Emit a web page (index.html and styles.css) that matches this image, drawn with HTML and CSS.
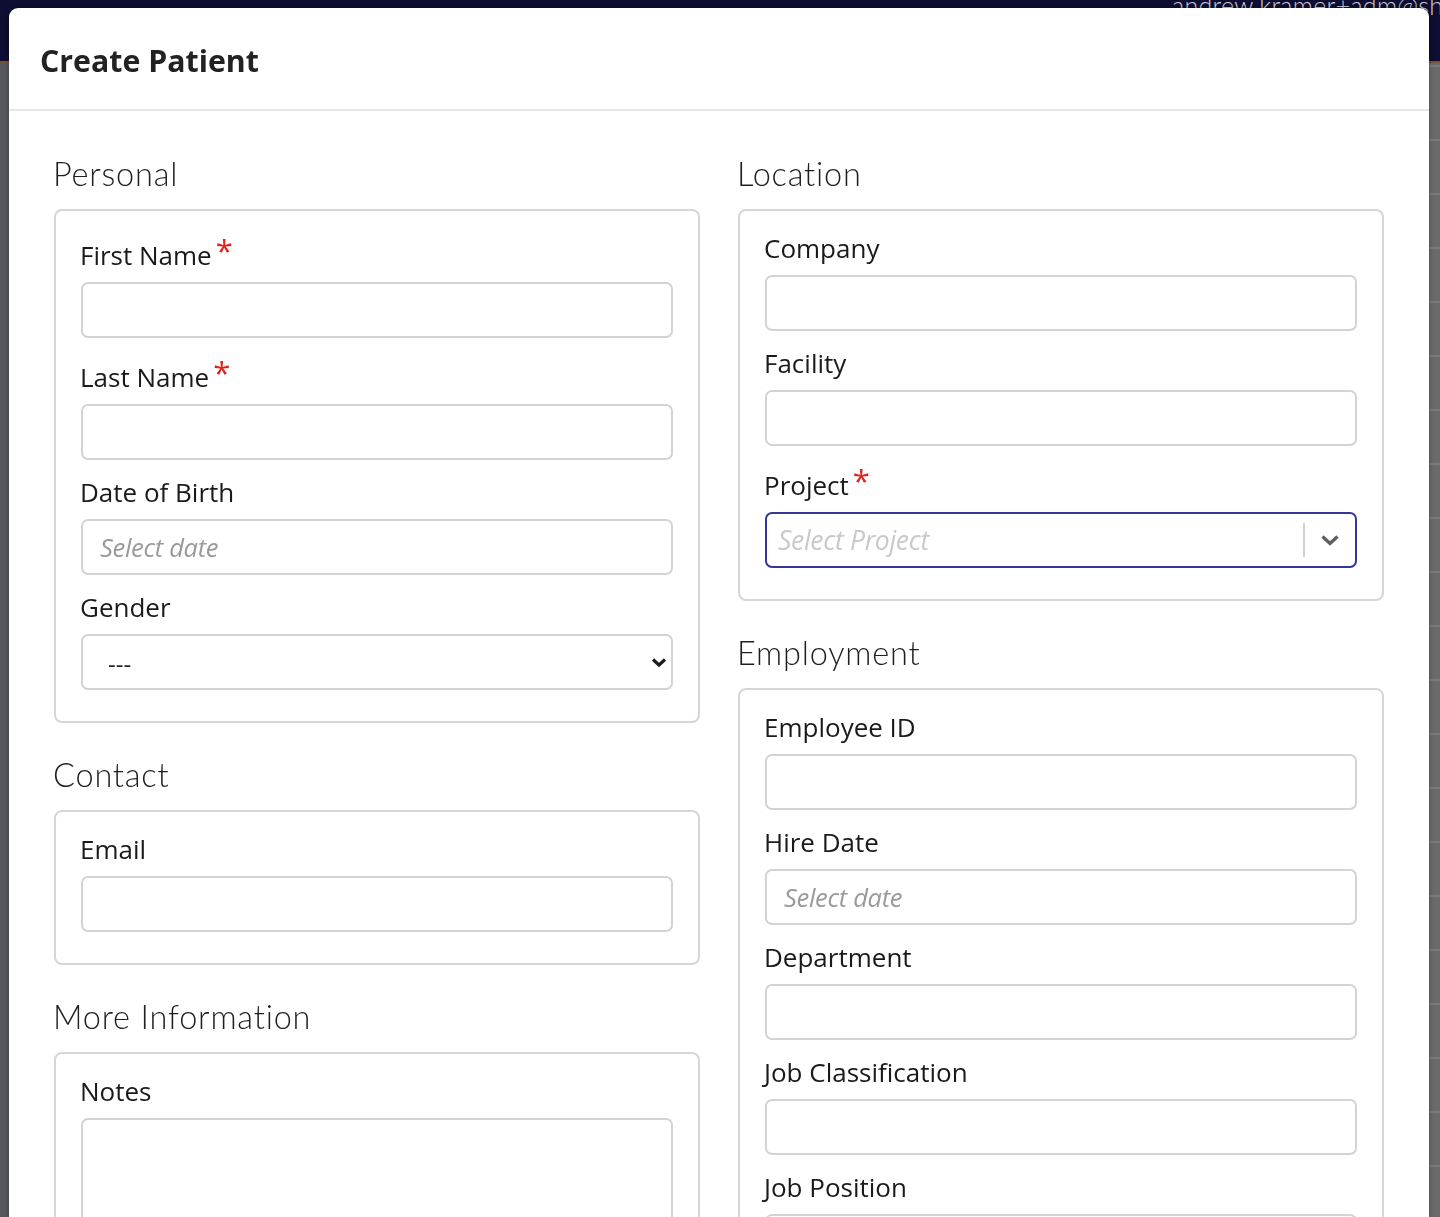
FILE: index.html
```html
<!DOCTYPE html>
<html lang="en">
<head>
<meta charset="utf-8">
<title>Create Patient</title>
<link rel="stylesheet" href="styles.css">
</head>
<body>
<div class="app">
  <header class="topbar"><span class="user">andrew.kramer+adm@sh</span></header>
  <div class="page">
    <aside class="sidebar"></aside>
    <main class="content"></main>
  </div>
</div>

<div class="modal" role="dialog" aria-labelledby="modal-title">
  <div class="modal-header">
    <h2 class="modal-title" id="modal-title">Create Patient</h2>
  </div>
  <div class="modal-body">
    <div class="col">
      <section class="section">
        <h3 class="section-title">Personal</h3>
        <div class="box">
          <div class="field">
            <label class="label req">First Name<span class="star">*</span></label>
            <div class="input"></div>
          </div>
          <div class="field">
            <label class="label req">Last Name<span class="star">*</span></label>
            <div class="input"></div>
          </div>
          <div class="field">
            <label class="label">Date of Birth</label>
            <div class="input"><span class="ph">Select date</span></div>
          </div>
          <div class="field">
            <label class="label">Gender</label>
            <div class="input select">
              <span class="val">---</span>
              <svg class="native-chev" width="16" height="12" viewBox="0 0 16 12"><path d="M2 3.5 L8 9 L14 3.5" fill="none" stroke="#1e1e1e" stroke-width="3.2"/></svg>
            </div>
          </div>
        </div>
      </section>
      <section class="section">
        <h3 class="section-title">Contact</h3>
        <div class="box">
          <div class="field">
            <label class="label">Email</label>
            <div class="input"></div>
          </div>
        </div>
      </section>
      <section class="section">
        <h3 class="section-title">More Information</h3>
        <div class="box">
          <div class="field">
            <label class="label">Notes</label>
            <div class="input textarea"></div>
          </div>
        </div>
      </section>
    </div>
    <div class="col">
      <section class="section">
        <h3 class="section-title">Location</h3>
        <div class="box">
          <div class="field">
            <label class="label">Company</label>
            <div class="input"></div>
          </div>
          <div class="field">
            <label class="label">Facility</label>
            <div class="input"></div>
          </div>
          <div class="field">
            <label class="label req">Project<span class="star">*</span></label>
            <div class="input rselect">
              <span class="ph light">Select Project</span>
              <span class="sep"></span>
              <svg class="chev" width="20" height="14" viewBox="0 0 20 14"><path d="M2.5 3.5 L10 10.5 L17.5 3.5" fill="none" stroke="#5f5f5f" stroke-width="3.4"/></svg>
            </div>
          </div>
        </div>
      </section>
      <section class="section">
        <h3 class="section-title">Employment</h3>
        <div class="box">
          <div class="field">
            <label class="label">Employee ID</label>
            <div class="input"></div>
          </div>
          <div class="field">
            <label class="label">Hire Date</label>
            <div class="input"><span class="ph">Select date</span></div>
          </div>
          <div class="field">
            <label class="label">Department</label>
            <div class="input"></div>
          </div>
          <div class="field">
            <label class="label">Job Classification</label>
            <div class="input"></div>
          </div>
          <div class="field">
            <label class="label">Job Position</label>
            <div class="input"></div>
          </div>
        </div>
      </section>
    </div>
  </div>
</div>
</body>
</html>
```

FILE: styles.css
```css
* { box-sizing: border-box; }

html, body {
  margin: 0;
  padding: 0;
  height: 100%;
  overflow: hidden;
}

body {
  font-family: "Open Sans", "Liberation Sans", sans-serif;
  color: #222;
  background: #5a5a61;
}

.app {
  display: flex;
  flex-direction: column;
  height: 100%;
}

.topbar {
  height: 63px;
  flex: none;
  background: #0d0e31;
  border-bottom: 2px solid #7d4f34;
  padding-left: 1172px;
  white-space: nowrap;
  overflow: hidden;
}

.user {
  display: block;
  margin-top: -8px;
  font-family: Lato, "Open Sans", sans-serif;
  font-weight: 300;
  font-size: 25px;
  line-height: 26px;
  letter-spacing: 0.3px;
  color: #c9c9d0;
}

.page {
  flex: 1;
  display: flex;
}

.sidebar {
  width: 300px;
  background: #56565d;
}

.content {
  flex: 1;
  background-color: #6a6a6a;
  background-image: repeating-linear-gradient(to bottom, transparent 0, transparent 52px, #7b7b7b 52px, #7b7b7b 54px);
  background-position: 0 24px;
}

.modal {
  position: fixed;
  top: 8px;
  left: 9px;
  width: 1420px;
  height: 1300px;
  background: #fff;
  border-radius: 9px 9px 0 0;
  box-shadow: 0 0 4px rgba(0, 0, 0, 0.35);
}

.modal-header {
  padding: 33px 31px 28px;
  border-bottom: 2px solid #e6e6e6;
}

.modal-title {
  margin: 0;
  font-size: 30.3px;
  line-height: 40px;
  font-weight: 700;
  color: #222;
}

.modal-body {
  padding: 43px 45px 0 45px;
  display: grid;
  grid-template-columns: 1fr 1fr;
  column-gap: 38px;
  align-items: start;
}

.section {
  margin-bottom: 32px;
}

.section-title {
  margin: 0 0 15px -1px;
  font-family: Lato, "Open Sans", sans-serif;
  font-weight: 300;
  font-size: 32.5px;
  line-height: 40px;
  color: #1f1f1f;
  letter-spacing: 0.8px;
}

.box {
  border: 2px solid #d6d6d6;
  border-radius: 8px;
  padding: 19px 25px 17px;
}

.field {
  margin-bottom: 14px;
}

.label {
  display: block;
  font-size: 26px;
  line-height: 36px;
  margin-bottom: 9px;
  margin-left: -1px;
  color: #1a1a1a;
}

.label.req {
  padding-top: 7px;
}

.star {
  color: #e0231c;
  font-size: 31px;
  line-height: 0;
  vertical-align: 3px;
  margin-left: 4px;
}

.input {
  height: 56px;
  border: 2px solid #d3d3d3;
  border-radius: 7px;
  background: #fff;
  display: flex;
  align-items: center;
  padding: 0 17px;
}

.ph {
  font-style: italic;
  font-size: 25.5px;
  letter-spacing: -0.3px;
  color: #9a9a9a;
}

.ph.light {
  font-size: 26.5px;
  color: #c9c9c9;
}

.select {
  padding: 0 4px 0 25px;
  justify-content: space-between;
}

.val {
  font-size: 24px;
  color: #222;
  padding-top: 2px;
}

.native-chev {
  display: block;
}

.rselect {
  border-color: #35359a;
  padding: 0 15px 0 11px;
}

.rselect .ph {
  flex: 1;
}

.sep {
  width: 2px;
  height: 34px;
  background: #cfcfcf;
  margin-right: 15px;
}

.chev {
  display: block;
}

.textarea {
  height: 150px;
}
```
